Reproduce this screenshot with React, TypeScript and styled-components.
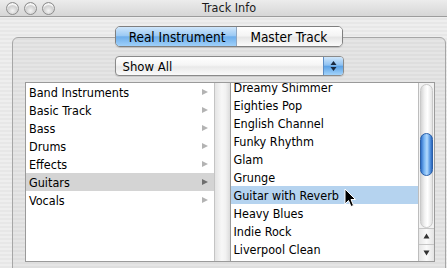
import React from "react";
import styled, { createGlobalStyle } from "styled-components";

const Global = createGlobalStyle`
  html, body { margin: 0; padding: 0; overflow: hidden; background: #ececec; }
  #root { width: 447px; height: 268px; overflow: hidden; }
`;

const FONT = `"DejaVu Sans Condensed", "DejaVu Sans", "Liberation Sans", sans-serif`;

const Window = styled.div`
  width: 458px;
  height: 290px;
  display: flex;
  flex-direction: column;
  font-family: ${FONT};
  font-stretch: condensed;
  color: #000;
  background: repeating-linear-gradient(to bottom, #eeeeee 0 2px, #e7e7e7 2px 4px);
`;

const TitleBar = styled.div`
  height: 16px;
  border-bottom: 1px solid #9c9c9c;
  display: grid;
  grid-template-columns: 1fr auto 1fr;
  align-items: center;
  background: linear-gradient(to bottom, #ececec, #d6d6d6);
`;

const Lights = styled.div`
  display: flex;
  gap: 5px;
  padding-left: 6px;
  align-items: center;
`;

const Light = styled.span`
  width: 13px;
  height: 13px;
  border-radius: 50%;
  box-sizing: border-box;
  border: 1px solid #8e8e8e;
  background: radial-gradient(circle at 50% 70%, #f4f4f4 0%, #d4d4d4 45%, #a9a9a9 100%);
  box-shadow: inset 0 2px 1px rgba(255,255,255,0.9);
  display: block;
`;

const Title = styled.div`
  font-size: 12.5px;
  color: #1a1a1a;
  line-height: 16px;
`;

const Body = styled.div`
  flex: 1;
  display: flex;
  flex-direction: column;
  padding-top: 9px;
`;

const SegRow = styled.div`
  display: flex;
  justify-content: center;
  position: relative;
  z-index: 1;
`;

const Segmented = styled.div`
  display: flex;
  height: 21px;
  box-sizing: border-box;
  border: 1px solid #7f7f7f;
  border-radius: 5px;
  overflow: hidden;
  box-shadow: 0 1px 1px rgba(0,0,0,0.15);
`;

const Segment = styled.div<{ $active?: boolean }>`
  display: flex;
  align-items: center;
  font-size: 13.5px;
  padding: ${(p) => (p.$active ? "0 11px 0 13px" : "0 15px 0 13px")};
  background: ${(p) =>
    p.$active
      ? "linear-gradient(to bottom, #cfe6fb 0%, #9ccaf4 45%, #6eaeeb 52%, #9fd0fa 100%)"
      : "linear-gradient(to bottom, #ffffff 0%, #f4f4f4 45%, #e6e6e6 55%, #fbfbfb 100%)"};
  & + & { border-left: 1px solid #8fa6c0; }
`;

const GroupBox = styled.div`
  margin: -10px 12px 0 12px;
  flex: 1;
  border: 1px solid #a6a6a6;
  border-radius: 6px;
  background: rgba(0, 0, 0, 0.035);
  padding: 18px 10px 0 12px;
  display: flex;
  flex-direction: column;
`;

const PopupRow = styled.div`
  display: flex;
  justify-content: center;
  padding-right: 2px;
`;

const Popup = styled.div`
  width: 229px;
  height: 20px;
  box-sizing: border-box;
  border: 1px solid #8a8a8a;
  border-radius: 4px;
  display: flex;
  overflow: hidden;
  box-shadow: 0 1px 1px rgba(0,0,0,0.12);
  background: linear-gradient(to bottom, #ffffff 0%, #f5f5f5 45%, #e9e9e9 55%, #fafafa 100%);
`;

const PopupLabel = styled.div`
  flex: 1;
  font-size: 13px;
  padding-left: 7px;
  display: flex;
  align-items: center;
`;

const PopupArrows = styled.div`
  width: 19px;
  border-left: 1px solid #5d8dc4;
  background: linear-gradient(to bottom, #cfe6fb 0%, #8fc2f2 45%, #5da3e6 52%, #a2d3fb 100%);
  display: flex;
  align-items: center;
  justify-content: center;
`;

const Browser = styled.div`
  margin-top: 6px;
  height: 180px;
  display: flex;
`;

const Column = styled.div`
  flex: 1;
  display: flex;
  box-sizing: border-box;
  border: 1px solid #9a9a9a;
  background: #fff;
  & + & { border-left: none; }
`;

const ListArea = styled.div`
  flex: 1;
  overflow: hidden;
  background: #fff;
`;

const List = styled.div<{ $offset: number }>`
  margin-top: ${(p) => p.$offset}px;
  display: flex;
  flex-direction: column;
`;

const Row = styled.div<{ $sel?: "gray" | "blue" }>`
  height: 18px;
  display: flex;
  align-items: center;
  justify-content: space-between;
  padding: 0 6px 0 3px;
  font-size: 12.5px;
  white-space: nowrap;
  background: ${(p) => (p.$sel === "gray" ? "#d4d4d4" : p.$sel === "blue" ? "#b5d3ef" : "transparent")};
`;

const Arrow = styled.span<{ $dark?: boolean }>`
  width: 0;
  height: 0;
  border-top: 3.5px solid transparent;
  border-bottom: 3.5px solid transparent;
  border-left: 6px solid ${(p) => (p.$dark ? "#6f6f6f" : "#b3b3b3")};
`;

const EmptySlot = styled.div`
  width: 15px;
  border-left: 1px solid #c4c4c4;
  background: linear-gradient(to right, #e4e4e4, #f7f7f7 45%, #f2f2f2 70%, #dcdcdc);
`;

const Scroller = styled.div`
  width: 15px;
  border-left: 1px solid #bdbdbd;
  display: flex;
  flex-direction: column;
  background: #f2f2f2;
`;

const Track = styled.div`
  height: 145px;
  box-sizing: border-box;
  margin: 1px 1px 0 1px;
  border-radius: 7px;
  border: 1px solid #c9c9c9;
  background: linear-gradient(to right, #d4d4d4, #f4f4f4 35%, #ffffff 60%, #e3e3e3);
  padding-top: 48px;
`;

const Thumb = styled.div`
  height: 43px;
  margin: 0 -1px;
  border-radius: 7px;
  border: 1px solid #2a5fa8;
  box-sizing: border-box;
  background: linear-gradient(to right, #2f6fc8, #7ab6f3 30%, #b3dafd 55%, #5b9ae4 80%, #2a66bd);
`;

const ArrowBtn = styled.div`
  height: 16px;
  display: flex;
  align-items: center;
  justify-content: center;
  border-top: 1px solid #c6c6c6;
  background: linear-gradient(to right, #e6e6e6, #fafafa 50%, #e4e4e4);
`;

const Cursor = styled.svg`
  position: absolute;
  left: 344px;
  top: 188px;
  z-index: 5;
`;

const left = ["Band Instruments", "Basic Track", "Bass", "Drums", "Effects", "Guitars", "Vocals"];
const right = [
  "Dreamy Shimmer",
  "Eighties Pop",
  "English Channel",
  "Funky Rhythm",
  "Glam",
  "Grunge",
  "Guitar with Reverb",
  "Heavy Blues",
  "Indie Rock",
  "Liverpool Clean",
  "Mustang",
];

export default function App() {
  return (
    <>
      <Global />
      <Window>
        <TitleBar>
          <Lights>
            <Light />
            <Light />
            <Light />
          </Lights>
          <Title>Track Info</Title>
          <div />
        </TitleBar>
        <Body>
          <SegRow>
            <Segmented>
              <Segment $active>Real Instrument</Segment>
              <Segment>Master Track</Segment>
            </Segmented>
          </SegRow>
          <GroupBox>
            <PopupRow>
              <Popup>
                <PopupLabel>Show All</PopupLabel>
                <PopupArrows>
                  <svg width="7" height="12" viewBox="0 0 7 12">
                    <path d="M3.5 1 L6.5 5 L0.5 5 Z M3.5 11 L6.5 7 L0.5 7 Z" fill="#1b2a40" />
                  </svg>
                </PopupArrows>
              </Popup>
            </PopupRow>
            <Browser>
              <Column>
                <ListArea>
                  <List $offset={0}>
                    {left.map((t) => (
                      <Row key={t} $sel={t === "Guitars" ? "gray" : undefined}>
                        {t}
                        <Arrow $dark={t === "Guitars"} />
                      </Row>
                    ))}
                  </List>
                </ListArea>
                <EmptySlot />
              </Column>
              <Column>
                <ListArea>
                  <List $offset={-5}>
                    {right.map((t) => (
                      <Row key={t} $sel={t === "Guitar with Reverb" ? "blue" : undefined}>
                        {t}
                      </Row>
                    ))}
                  </List>
                </ListArea>
                <Scroller>
                  <Track>
                    <Thumb />
                  </Track>
                  <ArrowBtn>
                    <svg width="7" height="6" viewBox="0 0 7 6">
                      <path d="M3.5 0.5 L6.5 5.5 L0.5 5.5 Z" fill="#333" />
                    </svg>
                  </ArrowBtn>
                  <ArrowBtn>
                    <svg width="7" height="6" viewBox="0 0 7 6">
                      <path d="M3.5 5.5 L6.5 0.5 L0.5 0.5 Z" fill="#333" />
                    </svg>
                  </ArrowBtn>
                </Scroller>
              </Column>
            </Browser>
          </GroupBox>
        </Body>
      </Window>
      <Cursor width="13" height="20" viewBox="0 0 13 20">
        <path d="M1 1 L1 16 L4.5 12.5 L7 18.5 L9.5 17.5 L7 11.5 L11.5 11.5 Z" fill="#000" stroke="#fff" strokeWidth="1" strokeLinejoin="round" />
      </Cursor>
    </>
  );
}
